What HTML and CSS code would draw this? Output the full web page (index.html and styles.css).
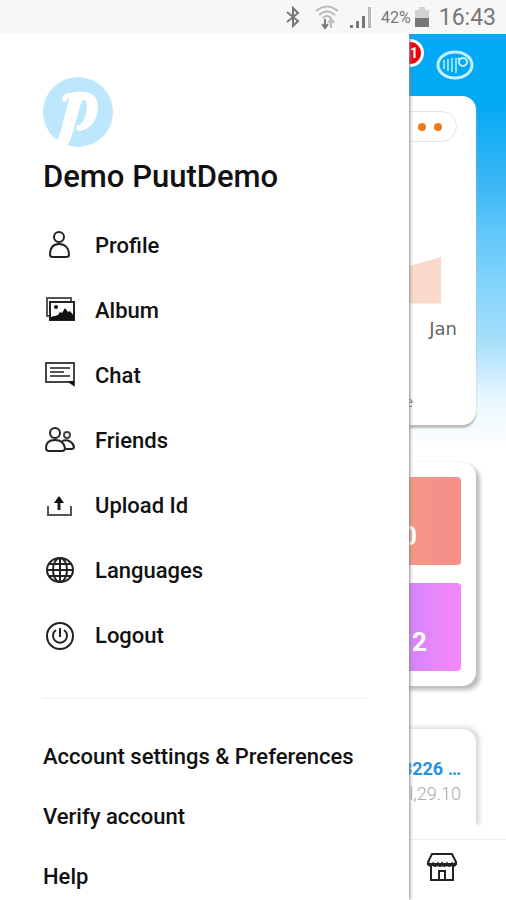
FILE: index.html
```html
<!DOCTYPE html>
<html lang="en">
<head>
<meta charset="utf-8">
<meta name="viewport" content="width=device-width, initial-scale=1">
<title>Puut</title>
<link rel="stylesheet" href="styles.css">
</head>
<body>
<header class="status">
  <svg width="16" height="22" viewBox="0 0 16 22" fill="none" stroke="#777" stroke-width="2"><path d="M2 6l11 9-5 5V2l5 5L2 16"/></svg>
  <svg class="wifi" width="24" height="26" viewBox="0 0 24 26" fill="none" stroke="#bbb" stroke-width="2"><path d="M1 7Q12-2 23 7M4 11q8-7 16 0M8 14q4-4 8 0"/><path d="M10 15v8M7 20l3 4 3-4" stroke="#777"/><path d="M16 24v-8M13 19l3-4 3 4"/></svg>
  <svg class="signal" width="24" height="24" viewBox="0 0 24 24" fill="#777"><path d="M1 20h3v3H1zM7 16h3v7H7zM13 11h3v12h-3z"/><path d="M19 2h3v21h-3z" fill="#bbb"/></svg>
  <span class="percent">42%</span>
  <svg width="14" height="22" viewBox="0 0 14 22"><path d="M4 1h6v3h4v8H0V4h4z" fill="#d2d2d2"/><path d="M0 12h14v9H0z" fill="#777"/></svg>
  <span class="time">16:43</span>
</header>
<div class="stage">
  <main class="home">
    <div class="topbar">
      <span class="badge">31</span>
      <svg width="38" height="32" viewBox="0 0 38 32" fill="none" stroke="#c5efff" stroke-width="2"><ellipse cx="19" cy="16" rx="17" ry="13" stroke-width="3"/><path d="M8 11v9M12 10v12M16 9v14M20 9v15" stroke-width="1.5"/><circle cx="27" cy="13" r="4"/><path d="M22 9l2 2" /></svg>
    </div>
    <section class="card chart">
      <div class="dots"><i></i><i></i></div>
      <svg class="area" width="60" height="48" viewBox="0 0 60 48"><path d="M0 18L60 1v46H0z" fill="#fad8ca"/><path d="M0 47h60" stroke="#eedcc0"/></svg>
      <span class="month">Jan</span>
      <span class="legend">e</span>
    </section>
    <section class="card tiles">
      <div class="tile coral">0</div>
      <div class="tile violet">2</div>
    </section>
    <section class="card entry">
      <span class="code">3226 …</span>
      <span class="amount">zl,29.10</span>
    </section>
    <nav class="tabs">
      <button type="button" aria-label="Shop"><svg width="32" height="32" viewBox="0 0 32 32" fill="none" stroke="#222" stroke-width="2"><path d="M6 3h20l4 8v2H2v-2zM5 14v15h22V14M13 29V20h6v9"/><path d="M2 12q2 4 5 1 2 3 5 0 2 3 4 0 2 3 5 0 2 3 5 0 2 3 4-1" stroke-width="3"/></svg></button>
    </nav>
  </main>
  <aside class="drawer">
    <svg class="logo" width="70" height="70" viewBox="0 0 70 70"><circle cx="35" cy="35" r="35" fill="#bde7fd"/><path fill="#fff" d="M20 25Q17 17 27 16Q35 14 43 15Q55 17 55 31Q53 51 37 54Q31 53 34 48Q39 49 42 40Q45 30 43 24Q40 21 38 26L29 58Q27 67 21 70L13 66Q17 59 18 53L26 22Q23 20 24 24Z"/></svg>
    <h1>Demo PuutDemo</h1>
    <ul class="menu">
      <li><a href="#"><svg width="34" height="34" viewBox="0 0 34 34"><circle cx="16" cy="8" r="5"/><path d="M7 26c0-7 3-11 9-11s10 4 10 11q0 2-3 2H10q-3 0-3-2z"/></svg>Profile</a></li>
      <li><a href="#"><svg width="34" height="34" viewBox="0 0 34 34"><path d="M7 22H4V4h24v4M4 18V4" stroke="#555"/><path d="M7 8h24v18H7z"/><circle cx="13" cy="13" r="2" class="solid"/><path class="solid" d="M7 26q0-4 5-4l3-1 2-3 2 1 3-5 3 4 2-1 4 5v4z"/></svg>Album</a></li>
      <li><a href="#"><svg width="34" height="34" viewBox="0 0 34 34"><path d="M3 4h28v22l-5-3H3z" stroke="#444"/><path d="M7 9h20M7 13h14M7 17h20" stroke="#555"/><path class="solid" d="M25 22h6v5z"/></svg>Chat</a></li>
      <li><a href="#"><svg width="34" height="34" viewBox="0 0 34 34"><circle cx="12" cy="9" r="5"/><path d="M3 24c0-5 3-8 9-8s9 3 10 8q0 3-3 3H6q-3 0-3-3z"/><circle cx="24" cy="11" r="3" stroke="#444"/><path d="M19 17c6-2 11 1 12 6q0 2-3 2h-5"/></svg>Friends</a></li>
      <li><a href="#"><svg width="34" height="34" viewBox="0 0 34 34"><path d="M5 17v9h23v-9" stroke="#555"/><path d="M16 21V9" stroke-width="3"/><path class="solid" d="M16 7l5 7H11z"/></svg>Upload Id</a></li>
      <li><a href="#"><svg width="34" height="34" viewBox="0 0 34 34"><ellipse cx="17" cy="16" rx="13" ry="12"/><ellipse cx="17" cy="16" rx="7" ry="12"/><path d="M17 4v24M4 16h26M6 10h22M6 22h22"/></svg>Languages</a></li>
      <li><a href="#"><svg width="34" height="34" viewBox="0 0 34 34"><circle cx="17" cy="17" r="13"/><path d="M13 11a7 7 0 1 0 8 0M17 9v9"/></svg>Logout</a></li>
    </ul>
    <hr>
    <ul class="links">
      <li><a href="#">Account settings &amp; Preferences</a></li>
      <li><a href="#">Verify account</a></li>
      <li><a href="#">Help</a></li>
    </ul>
  </aside>
</div>
</body>
</html>
```
FILE: styles.css
```css
* { box-sizing: border-box; }
body {
  margin: 0;
  min-height: 100vh;
  display: flex;
  flex-direction: column;
  font-family: Roboto, "Liberation Sans", sans-serif;
  background: #fff;
}
ul { list-style: none; margin: 0; padding: 0; }
a { color: inherit; text-decoration: none; }
svg { flex: none; }

.status {
  display: flex;
  align-items: center;
  justify-content: flex-end;
  height: 34px;
  padding-right: 10px;
  background: #f7f7f7;
  color: #777;
}
.wifi { margin-left: 14px; }
.signal { margin: 0 8px 0 10px; }
.percent { font-size: 16px; margin-right: 4px; }
.time { font-size: 23px; margin-left: 10px; }

.stage { position: relative; flex: 1; display: flex; overflow: hidden; }

.home {
  flex: 1;
  display: flex;
  flex-direction: column;
  background: linear-gradient(#03a9f4 70px, #3fb8f5 155px, #62c8fa 200px, #a5dffb 305px, #e8f7fe 365px, #fff 415px);
}
.topbar {
  display: flex;
  justify-content: flex-end;
  height: 62px;
  padding: 5px 32px 0 0;
  gap: 12px;
}
.topbar svg { margin-top: 10px; }
.badge {
  height: 28px;
  min-width: 28px;
  border: 3px solid #fff;
  border-radius: 14px;
  background: #f00011;
  color: #fff;
  font-size: 14px;
  font-weight: 700;
  line-height: 22px;
  text-align: center;
}
.card {
  display: flex;
  flex-direction: column;
  align-items: flex-end;
  margin: 0 30px;
  border-radius: 14px;
  background: #fff;
}
.chart {
  height: 329px;
  padding: 15px 19px 0;
  box-shadow: 0 3px 2px #bbb;
}
.dots {
  display: flex;
  align-items: center;
  justify-content: flex-end;
  gap: 8px;
  width: 100px;
  height: 31px;
  padding-right: 14px;
  border: 1px solid #e4e4e4;
  border-radius: 16px;
}
.dots i { width: 8px; height: 8px; border-radius: 50%; background: #ec7c1c; }
.area { margin: 114px 16px 0 0; }
.month {
  margin-top: 12px;
  color: #666;
  font: 18px/26px "DejaVu Sans", sans-serif;
}
.legend {
  margin: 50px 44px 0 0;
  color: #777;
  font: 14px/20px "Open Sans", sans-serif;
}
.tiles {
  gap: 18px;
  margin-top: 37px;
  padding: 15px;
  box-shadow: 4px 4px 4px #bbb, 0 0 1px #bbb;
}
.tile {
  display: flex;
  align-items: flex-end;
  justify-content: flex-end;
  width: 100%;
  height: 88px;
  border-radius: 4px;
  color: #fff;
  font-size: 26px;
  font-weight: 700;
  line-height: 30px;
}
.coral { padding: 0 44px 14px 0; background: linear-gradient(90deg, #fca57a 75%, #f48f8a 96%); }
.violet { padding: 0 34px 14px 0; background: linear-gradient(90deg, #b07cff 75%, #f088fa 97%); }
.entry {
  height: 98px;
  margin-top: 43px;
  padding: 28px 15px 0;
  border-radius: 14px 14px 0 0;
  box-shadow: 4px -2px 4px #ddd;
  clip-path: inset(-8px -12px 0 0);
}
.code { color: #2492dd; font-size: 18px; font-weight: 700; line-height: 24px; }
.amount { color: #aaa; font-size: 18px; font-weight: 300; line-height: 26px; }
.tabs {
  display: flex;
  justify-content: flex-end;
  margin-top: auto;
  height: 61px;
  padding: 11px 48px 0;
  border-top: 1px solid #eee;
  background: #fff;
}
.tabs button { height: 34px; padding: 0; border: 0; background: none; }

.drawer {
  position: absolute;
  inset: 0 auto 0 0;
  width: calc(100% - 97px);
  padding: 43px 43px 0;
  background: #fff;
  box-shadow: 1px 0 3px #888;
  color: #111;
}
.logo { display: block; }
h1 { margin: 12px 0 18px; font-size: 31px; font-weight: 500; line-height: 36px; }
.menu a {
  display: flex;
  align-items: center;
  gap: 18px;
  height: 65px;
  font-size: 22px;
  font-weight: 500;
}
.menu svg { fill: none; stroke: #222; stroke-width: 2; }
.menu .solid { fill: #111; stroke: none; }
hr { margin: 30px 0 28px; border: 0; border-top: 1px solid #eee; }
.links a {
  display: block;
  font-size: 22px;
  font-weight: 500;
  line-height: 60px;
  white-space: nowrap;
}
```
